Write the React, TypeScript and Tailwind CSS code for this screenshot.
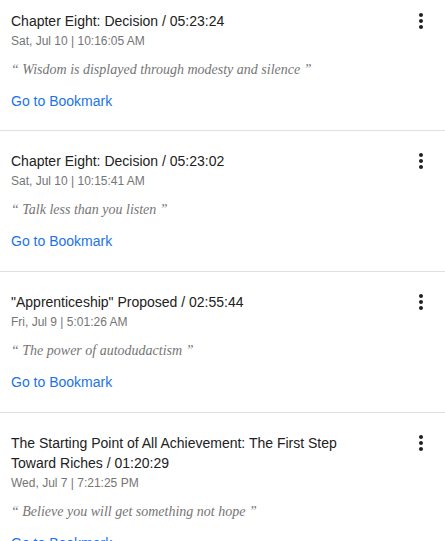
import React from "react";

type Bookmark = {
  title: string;
  date: string;
  quote: string;
};

const bookmarks: Bookmark[] = [
  {
    title: "Chapter Eight: Decision / 05:23:24",
    date: "Sat, Jul 10 | 10:16:05 AM",
    quote: "Wisdom is displayed through modesty and silence",
  },
  {
    title: "Chapter Eight: Decision / 05:23:02",
    date: "Sat, Jul 10 | 10:15:41 AM",
    quote: "Talk less than you listen",
  },
  {
    title: "\"Apprenticeship\" Proposed / 02:55:44",
    date: "Fri, Jul 9 | 5:01:26 AM",
    quote: "The power of autodudactism",
  },
  {
    title: "The Starting Point of All Achievement: The First Step Toward Riches / 01:20:29",
    date: "Wed, Jul 7 | 7:21:25 PM",
    quote: "Believe you will get something not hope",
  },
];

function MoreVertIcon() {
  return (
    <svg viewBox="0 0 24 24" className="w-6 h-6 fill-[#212121]">
      <path d="M12 8c1.1 0 2-.9 2-2s-.9-2-2-2-2 .9-2 2 .9 2 2 2zm0 2c-1.1 0-2 .9-2 2s.9 2 2 2 2-.9 2-2-.9-2-2-2zm0 6c-1.1 0-2 .9-2 2s.9 2 2 2 2-.9 2-2-.9-2-2-2z" />
    </svg>
  );
}

function BookmarkItem({ item, first }: { item: Bookmark; first: boolean }) {
  return (
    <div
      className={
        "flex items-start border-b border-[#e0e0e0] pl-[11px] pr-3 " +
        (first ? "pt-[11px] pb-[19px]" : "pt-5 pb-5")
      }
    >
      <div className="flex-1 min-w-0 pr-6">
        <div className="text-[14px] leading-5 text-[#212121]">{item.title}</div>
        <div className="text-[12px] leading-5 text-[#757575]">{item.date}</div>
        <div
          className="mt-[9px] text-[14px] leading-5 italic text-[#757575]"
          style={{ fontFamily: '"Liberation Serif", "Times New Roman", serif' }}
        >
          “ {item.quote} ”
        </div>
        <div className="mt-[11px] text-[14px] leading-5 text-[#1a73e8]">Go to Bookmark</div>
      </div>
      <button className="-mt-0.5 shrink-0">
        <MoreVertIcon />
      </button>
    </div>
  );
}

export default function App() {
  return (
    <div
      className="w-[445px] h-[541px] overflow-hidden bg-white"
      style={{ fontFamily: '"Liberation Sans", Arial, sans-serif' }}
    >
      {bookmarks.map((b, i) => (
        <BookmarkItem key={i} item={b} first={i === 0} />
      ))}
    </div>
  );
}
